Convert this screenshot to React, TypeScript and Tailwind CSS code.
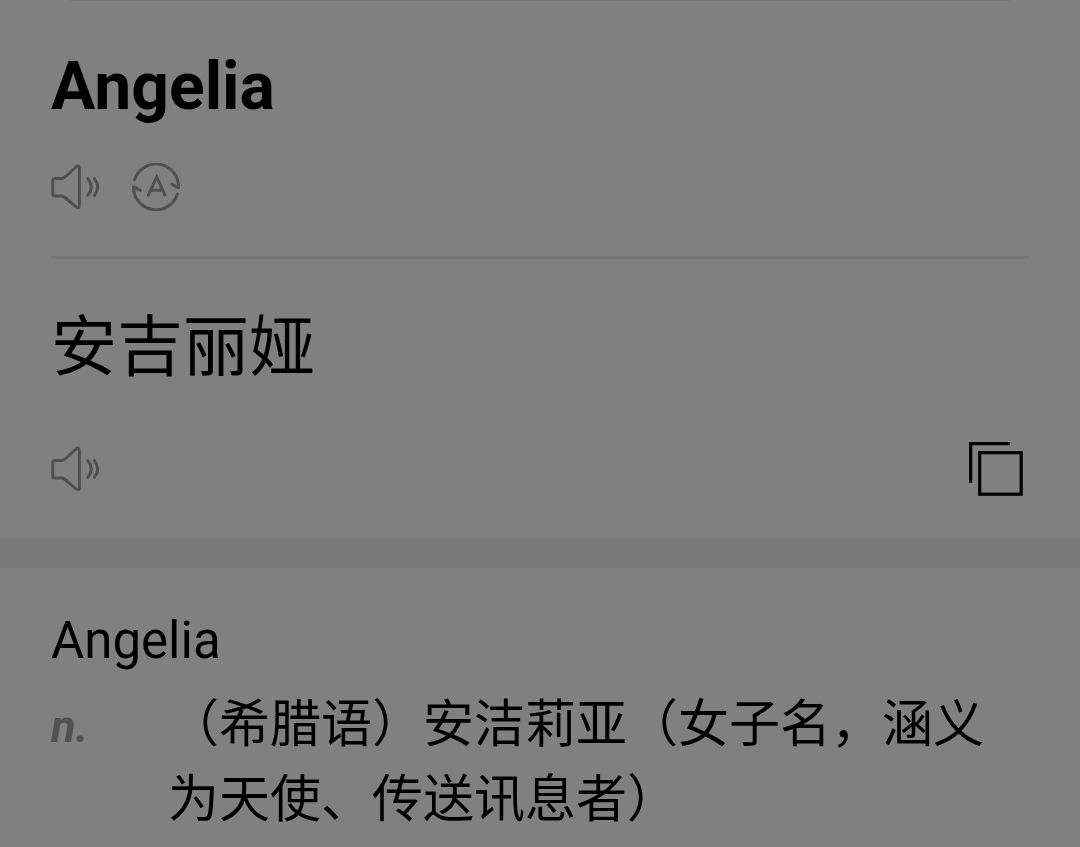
const HAN_FONT = "font-['Noto_Sans_CJK_SC',sans-serif]";

function SpeakerIcon() {
  return (
    <svg width="50" height="48" viewBox="0 0 50 48" fill="none" stroke="#4f4f4f" strokeWidth="3" strokeLinecap="round" strokeLinejoin="round">
      <path d="M3.8 15.4H11.2Q12.4 15.4 13.4 14.5L25 4Q28.4 1.4 28.4 5V42.7Q28.4 46.2 25 43.8L13.4 34Q12.4 33.1 11.2 33.1H3.8Q1.8 33.1 1.8 31.1V17.4Q1.8 15.4 3.8 15.4Z" />
      <path d="M36.8 15.6Q43.8 24 36.8 32.4" />
      <path d="M43.4 15.6Q50 24 43.4 32.4" />
    </svg>
  );
}

function AccentIcon() {
  return (
    <svg width="50" height="48" viewBox="0 0 50 48" fill="none" stroke="#4f4f4f" strokeWidth="3" strokeLinecap="round" strokeLinejoin="round">
      <path d="M3.6 16.8A22.4 22.4 0 0 1 47.4 24.6L40.8 21.2" />
      <path d="M46.4 31A22.4 22.4 0 0 1 2.6 24L9.4 27.4" />
      <path d="M17.4 32.2L25.7 14L34 32.2M20.8 27.2H30.8" strokeLinejoin="miter" />
    </svg>
  );
}

function CopyIcon() {
  return (
    <svg width="54" height="54" viewBox="0 0 54 54" fill="none" stroke="#000" strokeWidth="3.2">
      <path d="M1.7 40.7V1.7H40.7" />
      <rect x="10.7" y="10.7" width="41.5" height="41.5" />
    </svg>
  );
}

export default function App() {
  return (
    <div className="h-[847px] w-[1080px] overflow-hidden bg-[#808080] font-[Roboto,sans-serif] text-black">
      <div className="mx-[70px] h-px bg-[#797979]" />

      {/* Source word */}
      <section className="px-[51px] pt-[46px]">
        <h1 className="text-[66px] leading-[80px] font-bold">Angelia</h1>
        <div className="mt-9 flex h-12 items-center gap-[30px]">
          <button type="button" aria-label="Play">
            <SpeakerIcon />
          </button>
          <button type="button" aria-label="Accent">
            <AccentIcon />
          </button>
        </div>
      </section>

      <div className="mx-[51px] mt-[45px] h-[3px] bg-[#777777]" />

      {/* Translation */}
      <section className="px-[51px] pt-[42px]">
        <p lang="zh-CN" className={`text-[66px] leading-[80px] ${HAN_FONT}`}>
          安吉丽娅
        </p>
        <div className="mt-[58px] flex h-[60px] items-center justify-between pr-[6px]">
          <button type="button" aria-label="Play">
            <SpeakerIcon />
          </button>
          <button type="button" aria-label="Copy">
            <CopyIcon />
          </button>
        </div>
      </section>

      <div className="mt-[39px] h-[30px] bg-[#787878]" />

      {/* Dictionary entry */}
      <section className="px-[51px] pt-[43px]">
        <h2 className="text-[51px] leading-[60px]">Angelia</h2>
        <div className="mt-[11px] flex">
          <span className="w-[117px] shrink-0 pt-[7px] text-[45px] leading-[75px] font-bold text-[#515151] italic">n.</span>
          <p lang="zh-CN" className={`pt-px text-[51px] leading-[75px] ${HAN_FONT}`}>
            （希腊语）安洁莉亚（女子名，涵义为天使、传送讯息者）
          </p>
        </div>
      </section>
    </div>
  );
}
